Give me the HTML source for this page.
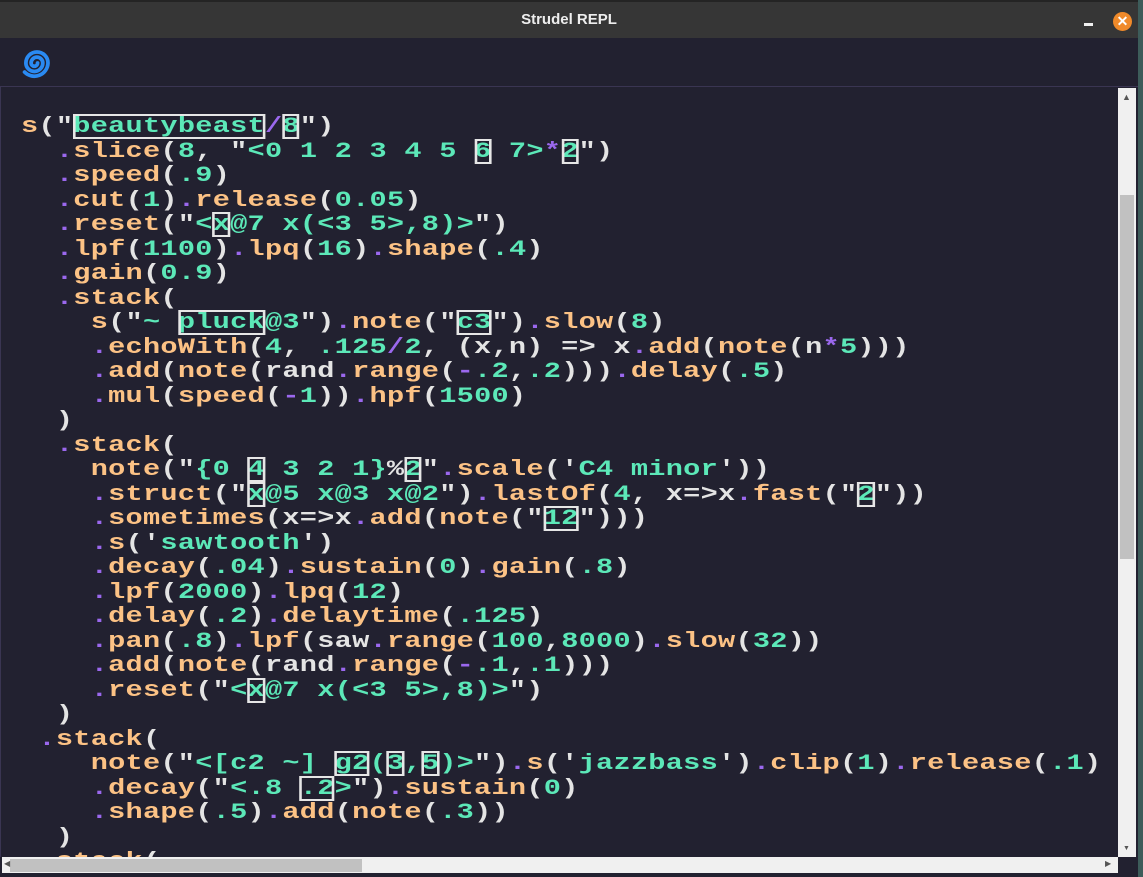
<!DOCTYPE html>
<html><head><meta charset="utf-8"><style>
html,body{margin:0;padding:0;width:1143px;height:877px;overflow:hidden;background:#3d5c5a;}
#win{position:absolute;left:0;top:0;width:1138px;height:877px;background:#222130;}
#tb{position:absolute;left:0;top:0;width:1138px;height:38px;background:#363636;border-top:2px solid #242424;box-sizing:border-box;}
#tb .t{position:absolute;left:0;right:0;top:9px;text-align:center;color:#eee;font:bold 15px "Liberation Sans",sans-serif;}
#min{position:absolute;left:1084px;top:21px;width:9px;height:3px;background:#f0f0f0;}
#cls{position:absolute;left:1113px;top:10px;width:19px;height:19px;border-radius:50%;background:#f08a2a;color:#fff;font:bold 14px "Liberation Sans",sans-serif;text-align:center;line-height:19px;}
#hdr{position:absolute;left:0;top:38px;width:1138px;height:48px;border-bottom:1px solid #3a3552;}
#ed{position:absolute;left:0;top:87px;width:1118px;height:770px;overflow:hidden;border-left:1px solid #3a3552;}
pre{margin:0;position:absolute;left:20px;top:28px;font:bold 22px/24.5px "Liberation Mono",monospace;letter-spacing:0.2px;color:#e4e4e4;white-space:pre;transform:scaleX(1.3);transform-origin:0 0;}
.o{color:#fcc285}.t{color:#5ce8b8}.p{color:#9b68ee}
.b{color:#5ce8b8;outline:2px solid #e6e6e6;outline-offset:-2px;}
#vs{position:absolute;left:1118px;top:88px;width:18px;height:769px;background:#f0f0f0;}
#vt{position:absolute;left:1120px;top:195px;width:14px;height:364px;background:#c1c1c1;}
#hs{position:absolute;left:2px;top:857px;width:1116px;height:16px;background:#f0f0f0;}
#ht{position:absolute;left:10px;top:859px;width:352px;height:13px;background:#c1c1c1;}
.ar{position:absolute;color:#555;font:9px "Liberation Sans",sans-serif;}
</style></head><body>
<div id="win">
<div id="tb"><div class="t">Strudel REPL</div><div id="min"></div><div id="cls">✕</div></div>
<div id="hdr"><svg width="70" height="48" style="position:absolute;left:0;top:0">
<g transform="translate(35,25) scale(1.3) translate(-35,-25)">
<path d="M37 25 A2.5 2.5 0 0 1 32 25 A4.5 4.5 0 0 1 41 25 A6.5 6.5 0 0 1 28 25 A8.5 8.5 0 0 1 45 25 A10.5 10.5 0 0 1 27 32" fill="none" stroke="#2a8af2" stroke-width="2.9" stroke-linecap="round"/></g>
</svg></div>
<div id="ed"><pre><span class="o">s</span>("<span class="b">beautybeast</span><span class="p">/</span><span class="b">8</span>")
  <span class="p">.</span><span class="o">slice</span>(<span class="t">8</span>, "<span class="t">&lt;0 1 2 3 4 5 </span><span class="b">6</span><span class="t"> 7&gt;</span><span class="p">*</span><span class="b">2</span>")
  <span class="p">.</span><span class="o">speed</span>(<span class="t">.9</span>)
  <span class="p">.</span><span class="o">cut</span>(<span class="t">1</span>)<span class="p">.</span><span class="o">release</span>(<span class="t">0.05</span>)
  <span class="p">.</span><span class="o">reset</span>("<span class="t">&lt;</span><span class="b">x</span><span class="t">@7 x(&lt;3 5&gt;,8)&gt;</span>")
  <span class="p">.</span><span class="o">lpf</span>(<span class="t">1100</span>)<span class="p">.</span><span class="o">lpq</span>(<span class="t">16</span>)<span class="p">.</span><span class="o">shape</span>(<span class="t">.4</span>)
  <span class="p">.</span><span class="o">gain</span>(<span class="t">0.9</span>)
  <span class="p">.</span><span class="o">stack</span>(
    <span class="o">s</span>("<span class="t">~ </span><span class="b">pluck</span><span class="t">@3</span>")<span class="p">.</span><span class="o">note</span>("<span class="b">c3</span>")<span class="p">.</span><span class="o">slow</span>(<span class="t">8</span>)
    <span class="p">.</span><span class="o">echoWith</span>(<span class="t">4</span>, <span class="t">.125</span><span class="p">/</span><span class="t">2</span>, (x,n) =&gt; x<span class="p">.</span><span class="o">add</span>(<span class="o">note</span>(n<span class="p">*</span><span class="t">5</span>)))
    <span class="p">.</span><span class="o">add</span>(<span class="o">note</span>(rand<span class="p">.</span><span class="o">range</span>(<span class="p">-</span><span class="t">.2</span>,<span class="t">.2</span>)))<span class="p">.</span><span class="o">delay</span>(<span class="t">.5</span>)
    <span class="p">.</span><span class="o">mul</span>(<span class="o">speed</span>(<span class="p">-</span><span class="t">1</span>))<span class="p">.</span><span class="o">hpf</span>(<span class="t">1500</span>)
  )
  <span class="p">.</span><span class="o">stack</span>(
    <span class="o">note</span>("<span class="t">{0 </span><span class="b">4</span><span class="t"> 3 2 1}</span>%<span class="b">2</span>"<span class="p">.</span><span class="o">scale</span>('<span class="t">C4 minor</span>'))
    <span class="p">.</span><span class="o">struct</span>("<span class="b">x</span><span class="t">@5 x@3 x@2</span>")<span class="p">.</span><span class="o">lastOf</span>(<span class="t">4</span>, x=&gt;x<span class="p">.</span><span class="o">fast</span>("<span class="b">2</span>"))
    <span class="p">.</span><span class="o">sometimes</span>(x=&gt;x<span class="p">.</span><span class="o">add</span>(<span class="o">note</span>("<span class="b">12</span>")))
    <span class="p">.</span><span class="o">s</span>('<span class="t">sawtooth</span>')
    <span class="p">.</span><span class="o">decay</span>(<span class="t">.04</span>)<span class="p">.</span><span class="o">sustain</span>(<span class="t">0</span>)<span class="p">.</span><span class="o">gain</span>(<span class="t">.8</span>)
    <span class="p">.</span><span class="o">lpf</span>(<span class="t">2000</span>)<span class="p">.</span><span class="o">lpq</span>(<span class="t">12</span>)
    <span class="p">.</span><span class="o">delay</span>(<span class="t">.2</span>)<span class="p">.</span><span class="o">delaytime</span>(<span class="t">.125</span>)
    <span class="p">.</span><span class="o">pan</span>(<span class="t">.8</span>)<span class="p">.</span><span class="o">lpf</span>(saw<span class="p">.</span><span class="o">range</span>(<span class="t">100</span>,<span class="t">8000</span>)<span class="p">.</span><span class="o">slow</span>(<span class="t">32</span>))
    <span class="p">.</span><span class="o">add</span>(<span class="o">note</span>(rand<span class="p">.</span><span class="o">range</span>(<span class="p">-</span><span class="t">.1</span>,<span class="t">.1</span>)))
    <span class="p">.</span><span class="o">reset</span>("<span class="t">&lt;</span><span class="b">x</span><span class="t">@7 x(&lt;3 5&gt;,8)&gt;</span>")
  )
 <span class="p">.</span><span class="o">stack</span>(
    <span class="o">note</span>("<span class="t">&lt;[c2 ~] </span><span class="b">g2</span><span class="t">(</span><span class="b">3</span><span class="t">,</span><span class="b">5</span><span class="t">)&gt;</span>")<span class="p">.</span><span class="o">s</span>('<span class="t">jazzbass</span>')<span class="p">.</span><span class="o">clip</span>(<span class="t">1</span>)<span class="p">.</span><span class="o">release</span>(<span class="t">.1</span>)
    <span class="p">.</span><span class="o">decay</span>("<span class="t">&lt;.8 </span><span class="b">.2</span><span class="t">&gt;</span>")<span class="p">.</span><span class="o">sustain</span>(<span class="t">0</span>)
    <span class="p">.</span><span class="o">shape</span>(<span class="t">.5</span>)<span class="p">.</span><span class="o">add</span>(<span class="o">note</span>(<span class="t">.3</span>))
  )
 <span class="p">.</span><span class="o">stack</span>(</pre></div>
<div id="vs"></div><div id="vt"></div>
<div class="ar" style="left:1122px;top:92px">▲</div>
<div class="ar" style="left:1123px;top:845px;font-size:7px">▼</div>
<div id="hs"></div><div id="ht"></div>
<div class="ar" style="left:4px;top:859px;font-size:8px">◀</div>
<div class="ar" style="left:1105px;top:859px;font-size:8px">▶</div>
</div>
</body></html>
